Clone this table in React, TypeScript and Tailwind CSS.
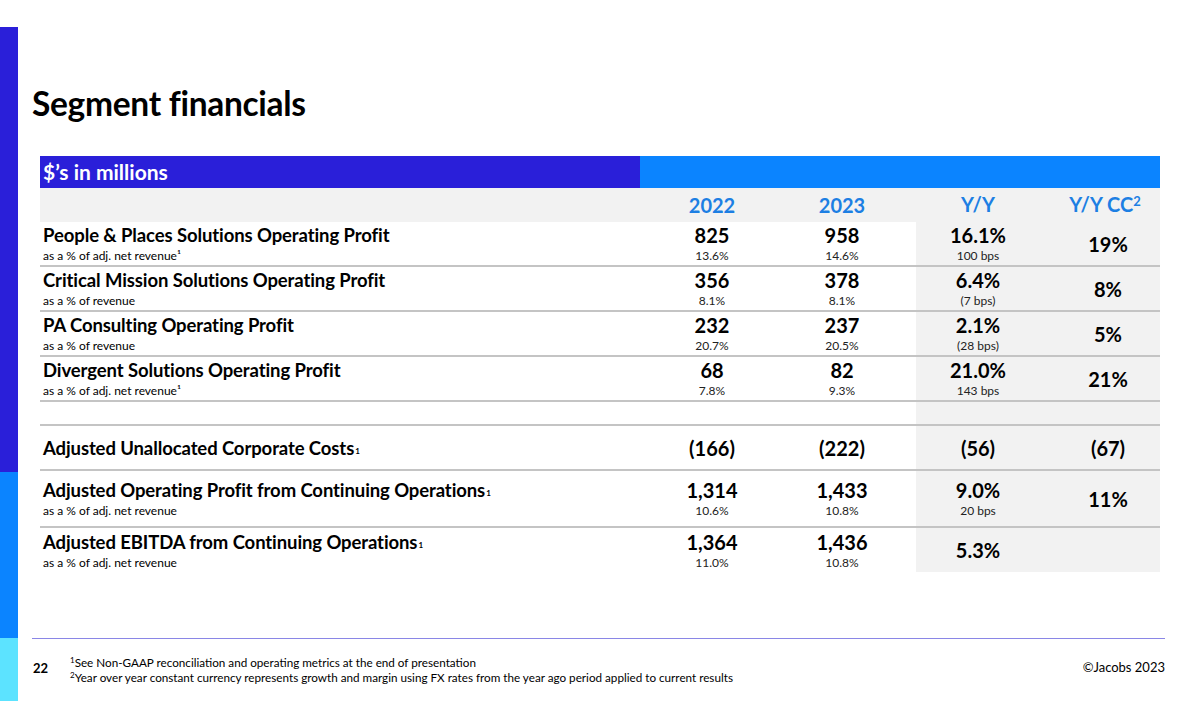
import React from "react";

type Cell = { v: string; s?: string };

type RowData = {
  title: string;
  sup?: boolean;
  sub?: string;
  y22: Cell;
  y23: Cell;
  yy: Cell;
  cc?: string;
  h: string;
  last?: boolean;
};

const rows: RowData[] = [
  {
    title: "People & Places Solutions Operating Profit",
    sub: "as a % of adj. net revenue¹",
    y22: { v: "825", s: "13.6%" },
    y23: { v: "958", s: "14.6%" },
    yy: { v: "16.1%", s: "100 bps" },
    cc: "19%",
    h: "h-[45px]",
  },
  {
    title: "Critical Mission Solutions Operating Profit",
    sub: "as a % of revenue",
    y22: { v: "356", s: "8.1%" },
    y23: { v: "378", s: "8.1%" },
    yy: { v: "6.4%", s: "(7 bps)" },
    cc: "8%",
    h: "h-[45px]",
  },
  {
    title: "PA Consulting Operating Profit",
    sub: "as a % of revenue",
    y22: { v: "232", s: "20.7%" },
    y23: { v: "237", s: "20.5%" },
    yy: { v: "2.1%", s: "(28 bps)" },
    cc: "5%",
    h: "h-[45px]",
  },
  {
    title: "Divergent Solutions Operating Profit",
    sub: "as a % of adj. net revenue¹",
    y22: { v: "68", s: "7.8%" },
    y23: { v: "82", s: "9.3%" },
    yy: { v: "21.0%", s: "143 bps" },
    cc: "21%",
    h: "h-[45px]",
  },
];

const totals: RowData[] = [
  {
    title: "Adjusted Unallocated Corporate Costs",
    sup: true,
    y22: { v: "(166)" },
    y23: { v: "(222)" },
    yy: { v: "(56)" },
    cc: "(67)",
    h: "h-[45px]",
  },
  {
    title: "Adjusted Operating Profit from Continuing Operations",
    sup: true,
    sub: "as a % of adj. net revenue",
    y22: { v: "1,314", s: "10.6%" },
    y23: { v: "1,433", s: "10.8%" },
    yy: { v: "9.0%", s: "20 bps" },
    cc: "11%",
    h: "h-[57px]",
  },
  {
    title: "Adjusted EBITDA from Continuing Operations",
    sup: true,
    sub: "as a % of adj. net revenue",
    y22: { v: "1,364", s: "11.0%" },
    y23: { v: "1,436", s: "10.8%" },
    yy: { v: "5.3%" },
    h: "h-[44px]",
    last: true,
  },
];

function Num({ c }: { c: Cell }) {
  return (
    <div className="flex flex-col items-center justify-center h-full">
      <span className="text-[20px] font-bold leading-[22px] text-black">{c.v}</span>
      {c.s && <span className="text-[12px] leading-[15px] mt-[2px] text-[#222]">{c.s}</span>}
    </div>
  );
}

function Row({ r }: { r: RowData }) {
  return (
    <div
      className={`grid grid-cols-[608px_128px_140px_124px_120px] ${r.h} ${
        r.last ? "" : "border-b-2 border-[#c4c4c4]"
      }`}
    >
      <div className="flex flex-col justify-center pl-[3px]">
        <span className="text-[18.5px] font-bold leading-[22px] text-black tracking-[-0.1px]">
          {r.title}
          {r.sup && <sup className="text-[8px] font-bold ml-[1px] relative -top-[1px]">1</sup>}
        </span>
        {r.sub && <span className="text-[12px] leading-[15px] mt-[2px] text-black">{r.sub}</span>}
      </div>
      <Num c={r.y22} />
      <div className="pr-[8px]">
        <Num c={r.y23} />
      </div>
      <div className="bg-[#f2f2f2]">
        <Num c={r.yy} />
      </div>
      <div className="bg-[#f2f2f2] pl-[16px] flex items-center justify-center">
        {r.cc && <span className="text-[20px] font-bold text-black">{r.cc}</span>}
      </div>
    </div>
  );
}

export default function App() {
  return (
    <div className="w-[1200px] h-[728px] bg-white flex font-['Lato','Open_Sans',sans-serif] overflow-hidden">
      <div className="flex flex-col w-[18px] pt-[27px] shrink-0">
        <div className="h-[445px] bg-[#2a1fd9]" />
        <div className="h-[166px] bg-[#0b84ff]" />
        <div className="h-[63px] bg-[#5ce3ff]" />
      </div>

      <div className="flex-1 flex flex-col pl-[14px]">
        <h1 className="mt-[83px] text-[33.5px] font-bold leading-[40px] text-black tracking-[-0.3px]">
          Segment financials
        </h1>

        <div className="ml-[8px] mt-[33px] w-[1120px]">
          <div className="flex h-[32px]">
            <div className="w-[600px] bg-[#2a1fd9] flex items-center pl-[3px]">
              <span className="text-[21px] font-bold text-white">$’s in millions</span>
            </div>
            <div className="flex-1 bg-[#0b84ff]" />
          </div>

          <div className="grid grid-cols-[608px_128px_140px_124px_120px] h-[34px] bg-[#f2f2f2] text-[#1d7fe3] text-[20px] font-bold">
            <div />
            <div className="flex items-end justify-center pb-[2px]">2022</div>
            <div className="flex items-end justify-center pb-[2px] pr-[8px]">2023</div>
            <div className="flex items-center justify-center pb-[3px]">Y/Y</div>
            <div className="flex items-center justify-center pl-[10px] pb-[3px]">
              Y/Y CC<sup className="text-[13px] relative -top-[3px]">2</sup>
            </div>
          </div>

          {rows.map((r) => (
            <Row key={r.title} r={r} />
          ))}

          <div className="grid grid-cols-[608px_128px_140px_124px_120px] h-[24px] border-b-2 border-[#c4c4c4]">
            <div />
            <div />
            <div />
            <div className="bg-[#f2f2f2]" />
            <div className="bg-[#f2f2f2]" />
          </div>

          {totals.map((r) => (
            <Row key={r.title} r={r} />
          ))}
        </div>

        <div className="mt-[66px] w-[1133px] h-px bg-[#8a86e6]" />

        <div className="flex w-[1133px] mt-[16px] items-start">
          <div className="w-[38px] pt-[6px] text-[13px] font-bold text-black leading-[15px] pl-[1px]">22</div>
          <div className="flex-1 text-[11.7px] leading-[15px] text-black">
            <div>
              <sup className="text-[8px]">1</sup>See Non-GAAP reconciliation and operating metrics at the end of presentation
            </div>
            <div>
              <sup className="text-[8px]">2</sup>Year over year constant currency represents growth and margin using FX rates
              from the year ago period applied to current results
            </div>
          </div>
          <div className="pt-[5px] text-[13px] leading-[15px] text-black">©Jacobs 2023</div>
        </div>
      </div>
    </div>
  );
}
